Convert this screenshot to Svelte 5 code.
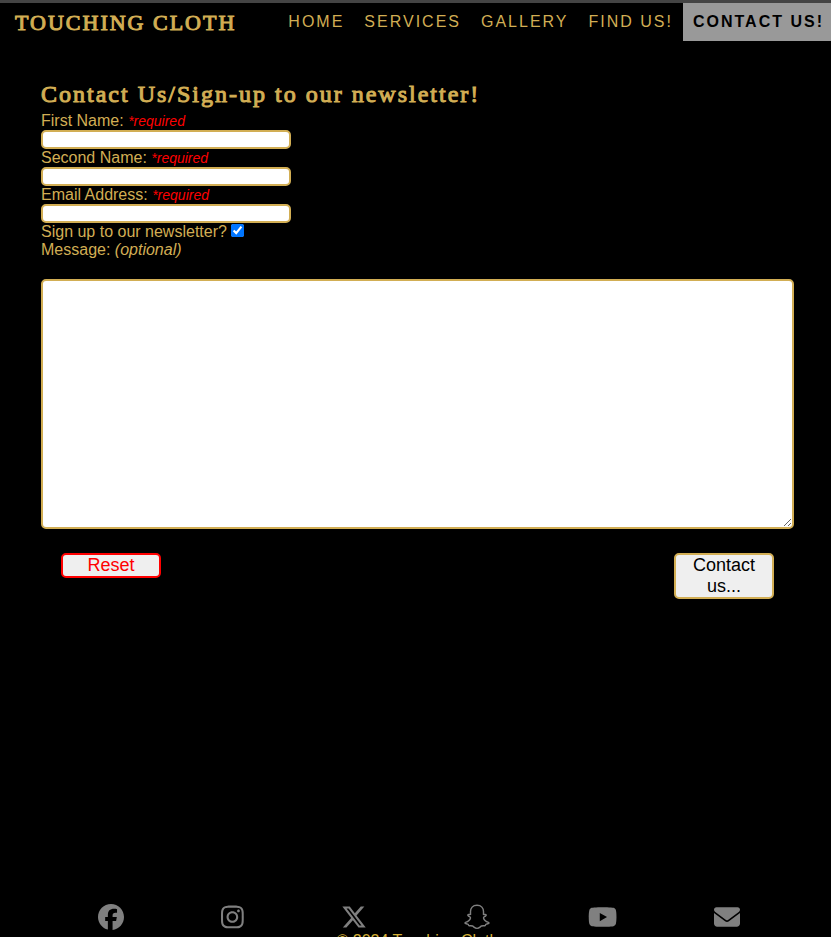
<script>
  const links = [
    { label: 'Home', href: '#home' },
    { label: 'Services', href: '#services' },
    { label: 'Gallery', href: '#gallery' },
    { label: 'Find us!', href: '#find-us' },
    { label: 'Contact us!', href: '#contact', active: true }
  ];

  const fields = [
    { id: 'first-name', label: 'First Name:', type: 'text' },
    { id: 'second-name', label: 'Second Name:', type: 'text' },
    { id: 'email', label: 'Email Address:', type: 'email' }
  ];

  const socials = [
    {
      name: 'Facebook',
      width: 512,
      path: 'M512 256C512 114.6 397.4 0 256 0S0 114.6 0 256C0 376 82.7 476.8 194.2 504.5V334.2H141.4V256h52.8V222.3c0-87.1 39.4-127.5 125-127.5c16.2 0 44.2 3.2 55.7 6.4V172c-6-.6-16.5-1-29.6-1c-42 0-58.2 15.9-58.2 57.2V256h83.6l-14.4 78.2H287V510.1C413.8 494.8 512 386.9 512 256z'
    },
    {
      name: 'Instagram',
      width: 448,
      path: 'M224.1 141c-63.6 0-114.9 51.3-114.9 114.9s51.3 114.9 114.9 114.9S339 319.5 339 255.9 287.7 141 224.1 141zm0 189.6c-41.1 0-74.7-33.5-74.7-74.7s33.5-74.7 74.7-74.7 74.7 33.5 74.7 74.7-33.6 74.7-74.7 74.7zm146.4-194.3c0 14.9-12 26.8-26.8 26.8-14.9 0-26.8-12-26.8-26.8s12-26.8 26.8-26.8 26.8 12 26.8 26.8zm76.1 27.2c-1.7-35.9-9.9-67.7-36.2-93.9-26.2-26.2-58-34.4-93.9-36.2-37-2.1-147.9-2.1-184.9 0-35.8 1.7-67.6 9.9-93.9 36.1s-34.4 58-36.2 93.9c-2.1 37-2.1 147.9 0 184.9 1.7 35.9 9.9 67.7 36.2 93.9s58 34.4 93.9 36.2c37 2.1 147.9 2.1 184.9 0 35.9-1.7 67.7-9.9 93.9-36.2 26.2-26.2 34.4-58 36.2-93.9 2.1-37 2.1-147.8 0-184.8zM398.8 388c-7.8 19.6-22.9 34.7-42.6 42.6-29.5 11.7-99.5 9-132.1 9s-102.7 2.6-132.1-9c-19.6-7.8-34.7-22.9-42.6-42.6-11.7-29.5-9-99.5-9-132.1s-2.6-102.7 9-132.1c7.8-19.6 22.9-34.7 42.6-42.6 29.5-11.7 99.5-9 132.1-9s102.7-2.6 132.1 9c19.6 7.8 34.7 22.9 42.6 42.6 11.7 29.5 9 99.5 9 132.1s2.7 102.7-9 132.1z'
    },
    {
      name: 'X',
      width: 512,
      path: 'M389.2 48h70.6L305.6 224.2 487 464H345L233.7 318.6 106.5 464H35.8L200.7 275.5 26.8 48H172.4L272.9 180.9 389.2 48zM364.4 421.8h39.1L151.1 88h-42L364.4 421.8z'
    },
    {
      name: 'Snapchat',
      width: 512,
      outline: true,
      path: 'M256 26c-86 0-128 58-128 124v56c-14 6-32-6-46 2-14 9-6 23 6 31 14 9 42 15 40 36-6 34-50 74-98 86-14 4-10 16-2 21 16 10 38 14 52 18 8 4 6 20 16 25 20 8 44-4 70 8 24 12 48 47 90 47s66-35 90-47c26-12 50 0 70-8 10-5 8-21 16-25 14-4 36-8 52-18 8-5 12-17-2-21-48-12-92-52-98-86-2-21 26-27 40-36 12-8 20-22 6-31-14-8-32 4-46-2v-56c0-66-42-124-128-124z'
    },
    {
      name: 'YouTube',
      width: 576,
      path: 'M549.655 124.083c-6.281-23.65-24.787-42.276-48.284-48.597C458.781 64 288 64 288 64S117.22 64 74.629 75.486c-23.497 6.322-42.003 24.947-48.284 48.597-11.412 42.867-11.412 132.305-11.412 132.305s0 89.438 11.412 132.305c6.281 23.65 24.787 41.5 48.284 47.821C117.22 448 288 448 288 448s170.78 0 213.371-11.486c23.497-6.321 42.003-24.171 48.284-47.821 11.412-42.867 11.412-132.305 11.412-132.305s0-89.438-11.412-132.305zm-317.51 213.508V175.185l142.739 81.205-142.739 81.201z'
    },
    {
      name: 'Email',
      width: 512,
      path: 'M48 64C21.5 64 0 85.5 0 112c0 15.1 7.1 29.3 19.2 38.4L236.8 313.6c11.4 8.5 27 8.5 38.4 0L492.8 150.4c12.1-9.1 19.2-23.3 19.2-38.4c0-26.5-21.5-48-48-48H48zM0 176V384c0 35.3 28.7 64 64 64H448c35.3 0 64-28.7 64-64V176L294.4 339.2c-22.8 17.1-54 17.1-76.8 0L0 176z'
    }
  ];

  let newsletter = $state(true);
</script>

<div class="page">
  <header>
    <a class="brand" href="#home">Touching Cloth</a>
    <nav aria-label="Main">
      {#each links as link}
        <a href={link.href} class:active={link.active} aria-current={link.active ? 'page' : undefined}>{link.label}</a>
      {/each}
    </nav>
  </header>

  <main>
    <h1>Contact Us/Sign-up to our newsletter!</h1>
    <form onsubmit={(event) => event.preventDefault()}>
      {#each fields as field}
        <label for={field.id}>{field.label} <em class="required">*required</em></label>
        <input class="field" id={field.id} name={field.id} type={field.type} required />
      {/each}
      <div class="check">
        <label for="newsletter">Sign up to our newsletter?</label>
        <input id="newsletter" type="checkbox" bind:checked={newsletter} />
      </div>
      <label for="message">Message: <em>(optional)</em></label>
      <textarea id="message" name="message"></textarea>
      <div class="actions">
        <button class="reset" type="reset">Reset</button>
        <button type="submit">Contact us...</button>
      </div>
    </form>
  </main>

  <footer>
    <div class="socials">
      {#each socials as icon}
        <a href="#{icon.name.toLowerCase()}" aria-label={icon.name}>
          <svg viewBox="0 0 {icon.width} 512" class:outline={icon.outline} aria-hidden="true"><path d={icon.path} /></svg>
        </a>
      {/each}
    </div>
    <p>© 2024 Touching Cloth</p>
  </footer>
</div>

<style>
  :global(body) {
    background: #000;
  }

  .page {
    display: flex;
    flex-direction: column;
    height: 100vh;
    min-height: 700px;
    overflow: hidden;
    box-sizing: border-box;
    border-top: 3px solid #444;
    background: #000;
    color: #d2ae54;
    font: 16px/18px "Liberation Sans", Arial, sans-serif;
  }

  header {
    display: flex;
    justify-content: space-between;
    align-items: flex-start;
  }

  .brand,
  h1 {
    font-family: "Liberation Serif", "Times New Roman", serif;
    font-weight: 400;
    letter-spacing: 2px;
    -webkit-text-stroke: 1px currentColor;
  }

  .brand {
    padding-left: 15px;
    color: inherit;
    font-size: 22px;
    line-height: 40px;
    text-decoration: none;
    text-transform: uppercase;
    white-space: nowrap;
  }

  nav {
    display: flex;
    margin-right: -3px;
  }

  nav a {
    padding: 10px;
    color: inherit;
    letter-spacing: 2px;
    text-decoration: none;
    text-transform: uppercase;
    white-space: nowrap;
  }

  nav .active {
    background: #999;
    color: #000;
    font-weight: 700;
  }

  main {
    flex: 1;
    padding: 33px 37px 0 41px;
  }

  h1 {
    margin: 0;
    font-size: 24px;
    line-height: 36px;
  }

  form {
    display: flex;
    flex-direction: column;
    align-items: flex-start;
  }

  .required {
    color: #f00;
    font-size: 14px;
  }

  .field,
  textarea,
  button {
    box-sizing: border-box;
    border: 2px solid #d2ae54;
    border-radius: 5px;
  }

  .field {
    width: 250px;
    height: 19px;
    padding: 0 2px;
    background: #fff;
  }

  .check {
    display: flex;
    gap: 4px;
  }

  .check input {
    width: 13px;
    height: 13px;
    margin: 1px 0 0;
  }

  textarea {
    width: 100%;
    height: 250px;
    margin: 20px 0 24px;
    background: #fff;
    resize: both;
  }

  .actions {
    display: flex;
    justify-content: space-between;
    align-items: flex-start;
    align-self: stretch;
    padding: 0 20px;
  }

  button {
    width: 100px;
    padding: 0 6px;
    background: #efefef;
    color: #000;
    font: 18px/21px "Liberation Sans", Arial, sans-serif;
  }

  .reset {
    border-color: #f00;
    color: #f00;
  }

  footer {
    margin-bottom: -13px;
    color: #d4af37;
    text-align: center;
  }

  .socials {
    display: flex;
    justify-content: space-between;
    padding: 0 91px 0 98px;
  }

  .socials a {
    display: flex;
    color: #808080;
  }

  svg {
    height: 26px;
    fill: currentColor;
  }

  .outline {
    fill: none;
    stroke: currentColor;
    stroke-width: 28px;
  }

  footer p {
    margin: 2px 0 0;
    padding-left: 4px;
  }
</style>
